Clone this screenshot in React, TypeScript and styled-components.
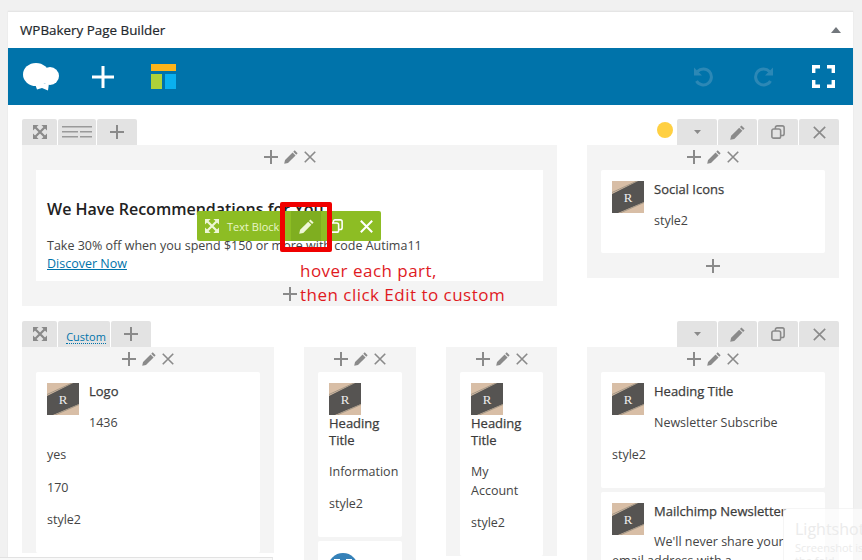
import React from 'react';
import styled, { createGlobalStyle } from 'styled-components';

const GlobalStyle = createGlobalStyle`
  html, body {
    margin: 0;
    padding: 0;
    overflow: hidden;
    background: #f1f1f1;
  }
  * {
    box-sizing: border-box;
  }
`;

const Page = styled.div`
  position: relative;
  width: 862px;
  height: 560px;
  overflow: hidden;
  padding: 11px 0 0 8px;
  font-family: 'Open Sans', 'Noto Sans', sans-serif;
  font-size: 12.5px;
  line-height: 19px;
  color: #444;
`;

const Panel = styled.div`
  width: 845px;
  height: 600px;
  background: #fff;
  border-top: 1px solid #e5e5e5;
  box-shadow: 0 0 1px #ddd;
`;

const PanelHeader = styled.div`
  display: flex;
  align-items: center;
  justify-content: space-between;
  height: 36px;
  padding: 0 12px;
  font-size: 13.4px;
  font-weight: 500;
  color: #23282d;
  -webkit-text-stroke: 0.2px #23282d;
`;

const CollapseArrow = styled.span`
  width: 0;
  height: 0;
  border-left: 5px solid transparent;
  border-right: 5px solid transparent;
  border-bottom: 6px solid #72777c;
`;

const Toolbar = styled.div`
  display: flex;
  justify-content: space-between;
  height: 57px;
  padding-left: 3px;
  background: #0073aa;
`;

const ToolbarGroup = styled.div`
  display: flex;
`;

const ToolbarButton = styled.div<{ $gap?: number }>`
  display: flex;
  align-items: center;
  justify-content: center;
  width: 60px;
  height: 57px;
  margin-right: ${(p) => p.$gap ?? 0}px;
`;

const Editor = styled.div`
  padding: 14px 14px 0;
`;

const Row = styled.section`
  margin-bottom: 15px;
`;

const RowControls = styled.div`
  display: flex;
  justify-content: space-between;
  height: 26px;
`;

const TabGroup = styled.div`
  display: flex;
  align-items: flex-end;
  gap: 1px;
`;

const Tab = styled.div<{ $width: number }>`
  display: flex;
  align-items: center;
  justify-content: center;
  width: ${(p) => p.$width}px;
  height: 26px;
  background: #e3e3e3;
  border-radius: 2px 2px 0 0;
`;

const CustomLink = styled.a`
  font-size: 11px;
  line-height: 13px;
  margin: 6px 0 0 4px;
  color: #0073aa;
  border-bottom: 1px dotted #0073aa;
`;

const StatusDot = styled.span`
  width: 16px;
  height: 16px;
  margin: 3px 3px 0 0;
  align-self: flex-start;
  border-radius: 50%;
  background: #ffd042;
`;

const RowBody = styled.div<{ $columns: string }>`
  display: grid;
  grid-template-columns: ${(p) => p.$columns};
  column-gap: 30px;
  align-items: start;
`;

const Column = styled.div`
  padding: 0 14px;
  background: #f4f4f4;
`;

const ColumnControls = styled.div`
  display: flex;
  align-items: center;
  justify-content: center;
  gap: 6px;
  height: 25px;
  padding-bottom: 1px;
`;

const ColumnFooter = styled.div`
  display: flex;
  align-items: center;
  justify-content: center;
  height: 25px;
`;

const Card = styled.div`
  padding: 11px 11px 1px;
  background: #fff;
  border-radius: 2px;
  & + & {
    margin-top: 4px;
  }
  &::after {
    content: '';
    display: block;
    clear: both;
  }
`;

const Thumb = styled.svg`
  float: left;
  width: 32px;
  height: 32px;
  margin-right: 10px;
`;

const ElementName = styled.div`
  margin-bottom: 12.5px;
  font-size: 13px;
  line-height: 17px;
  font-weight: 500;
  color: #3c3c3c;
  -webkit-text-stroke: 0.25px #3c3c3c;
`;

const Param = styled.p`
  margin: 0 0 13.5px;
`;

const Spacer = styled.div`
  height: 9px;
`;

const TextCard = styled.div`
  height: 111px;
  padding: 28px 11px 0;
  background: #fff;
`;

const TextHeading = styled.h3`
  margin: 0 0 17px;
  font-size: 16px;
  line-height: 22px;
  font-weight: 600;
  color: #222;
`;

const TextLine = styled.div`
  line-height: 18px;
`;

const TextLink = styled.a`
  color: #0073aa;
  text-decoration: underline;
`;

const GreenBar = styled.div`
  position: absolute;
  left: 197px;
  top: 211px;
  display: flex;
  align-items: center;
  width: 184px;
  height: 30px;
  background: #8dbd24;
  border-radius: 2px;
  color: #e9f5c9;
  font-size: 11px;
`;

const GreenItem = styled.div<{ $width: number; $active?: boolean }>`
  display: flex;
  align-items: center;
  justify-content: center;
  width: ${(p) => p.$width}px;
  height: 30px;
  background: ${(p) => (p.$active ? '#7fae20' : 'transparent')};
`;

const BarLabel = styled.span`
  width: 64px;
  white-space: nowrap;
`;

const RedFrame = styled.div`
  position: absolute;
  left: 280px;
  top: 202px;
  width: 52px;
  height: 50px;
  border: 5px solid #f00000;
  border-radius: 2px;
`;

const Note = styled.div`
  position: absolute;
  left: 300px;
  top: 259px;
  font-size: 17px;
  line-height: 24px;
  letter-spacing: 0.48px;
  color: #e01a1f;
`;

const ShotToast = styled.div`
  position: absolute;
  left: 783px;
  top: 508px;
  width: 90px;
  height: 60px;
  padding: 10px 0 0 11px;
  background: rgba(255, 255, 255, 0.6);
  border: 1px solid rgba(225, 225, 225, 0.35);
  color: #ebebeb;
  overflow: hidden;
`;

const ToastTitle = styled.div`
  margin-bottom: 2px;
  font-size: 16px;
  line-height: 20px;
`;

const ToastText = styled.div`
  font-size: 11px;
  line-height: 13px;
  white-space: nowrap;
`;

const BottomEdge = styled.div`
  position: absolute;
  left: 0;
  bottom: 0;
  width: 273px;
  height: 3px;
  background: #f8f8f8;
  border-top: 1px solid #e2e2e2;
  border-right: 1px solid #e8e8e8;
`;

const GREY = '#8a8a8a';

function PlusIcon({ size = 14, color = GREY, width = 2 }: { size?: number; color?: string; width?: number }) {
  return (
    <svg width={size} height={size} viewBox="0 0 16 16">
      <path d="M8 0V16M0 8H16" stroke={color} strokeWidth={width * (16 / size)} fill="none" />
    </svg>
  );
}

function CloseIcon({ size = 13, color = GREY, width = 1.6 }: { size?: number; color?: string; width?: number }) {
  return (
    <svg width={size} height={size} viewBox="0 0 16 16">
      <path d="M1 1L15 15M15 1L1 15" stroke={color} strokeWidth={width * (16 / size)} fill="none" />
    </svg>
  );
}

function PencilIcon({ size = 15, color = GREY }: { size?: number; color?: string }) {
  return (
    <svg width={size} height={size} viewBox="0 0 16 16" fill={color}>
      <path d="M12.2 0.4L15.6 3.8L14 5.4L10.6 2Z" />
      <path d="M9.8 2.8L13.2 6.2L4.6 14.8L0.2 15.8L1.2 11.4Z" />
    </svg>
  );
}

function CopyIcon({ size = 14, color = GREY }: { size?: number; color?: string }) {
  return (
    <svg width={size} height={size} viewBox="0 0 16 16" fill="none" stroke={color} strokeWidth="1.8">
      <rect x="1" y="4.5" width="10" height="10.5" rx="2" />
      <path d="M5 4.5V3a2 2 0 0 1 2-2h6a2 2 0 0 1 2 2v7a2 2 0 0 1-2 2h-2" />
    </svg>
  );
}

function ExpandIcon({ color = GREY, size = 14 }: { color?: string; size?: number }) {
  return (
    <svg width={size} height={size} viewBox="0 0 14 14" fill={color}>
      <path d="M0 0H5.6L0 5.6ZM14 0V5.6L8.4 0ZM0 14V8.4L5.6 14ZM14 14H8.4L14 8.4Z" />
      <path d="M2.5 2.5L11.5 11.5M11.5 2.5L2.5 11.5" stroke={color} strokeWidth="2.2" />
    </svg>
  );
}

function LinesIcon() {
  return (
    <svg width="30" height="12" viewBox="0 0 30 12" fill="#9a9a9a">
      <path d="M0 0H30V1.4H0ZM0 5H16V6.4H0ZM18 5H30V6.4H18ZM0 10H16V11.4H0ZM18 10H30V11.4H18Z" />
    </svg>
  );
}

function CaretIcon() {
  return (
    <svg width="7" height="4" viewBox="0 0 7 4">
      <path d="M0 0H7L3.5 4Z" fill={GREY} />
    </svg>
  );
}

function CloudLogo() {
  return (
    <svg width="36" height="28" viewBox="0 0 36 28" fill="#fff">
      <ellipse cx="13" cy="11.5" rx="13" ry="11.5" />
      <ellipse cx="27" cy="13" rx="9" ry="9" />
      <path d="M12 21L14 26.5L19 25L25 27.5L26 20Z" />
    </svg>
  );
}

function LayoutLogo() {
  return (
    <svg width="26" height="26" viewBox="0 0 26 26">
      <rect x="0" y="0" width="25" height="7" fill="#fdb41a" />
      <rect x="0" y="10" width="11" height="15" fill="#aed13a" />
      <rect x="14" y="10" width="11" height="15" fill="#0ab0ef" />
    </svg>
  );
}

function UndoIcon({ flip }: { flip?: boolean }) {
  return (
    <svg width="21" height="21" viewBox="0 0 21 21" fill="none" style={flip ? { transform: 'scaleX(-1)' } : undefined}>
      <path d="M4.5 5.5A8 8 0 1 1 3.5 15" stroke="#2c88b6" strokeWidth="3" />
      <path d="M1 1.5V9.5H9Z" fill="#2c88b6" />
    </svg>
  );
}

function FullscreenIcon() {
  return (
    <svg width="23" height="23" viewBox="0 0 23 23" fill="none" stroke="#fff" strokeWidth="3.4">
      <path d="M1.7 8V1.7H8M15 1.7H21.3V8M21.3 15V21.3H15M8 21.3H1.7V15" />
    </svg>
  );
}

function RThumb() {
  return (
    <Thumb viewBox="0 0 32 32">
      <rect width="32" height="32" fill="#d8bea6" />
      <path d="M0 13L32 -3V21L6 32H0Z" fill="#565452" />
      <path d="M0 11.5L25 0M8 32L32 21.5" stroke="#8d8678" strokeWidth="0.7" />
      <text x="16" y="21" textAnchor="middle" fontFamily="'Liberation Serif', serif" fontSize="13" fill="#eee">
        R
      </text>
    </Thumb>
  );
}

function GlobeBadge() {
  return (
    <svg width="32" height="32" viewBox="0 0 32 32">
      <circle cx="14" cy="16" r="15" fill="#3581b8" />
      <path d="M5 7H11V10H5ZM17 7H23V10H17Z" fill="#fff" />
    </svg>
  );
}

function ElementControls() {
  return (
    <ColumnControls>
      <PlusIcon />
      <PencilIcon size={14} />
      <CloseIcon size={12} />
    </ColumnControls>
  );
}

function RowActions({ dot }: { dot?: boolean }) {
  return (
    <TabGroup>
      {dot && <StatusDot />}
      <Tab $width={40}>
        <CaretIcon />
      </Tab>
      <Tab $width={39}>
        <PencilIcon />
      </Tab>
      <Tab $width={40}>
        <CopyIcon />
      </Tab>
      <Tab $width={40}>
        <CloseIcon />
      </Tab>
    </TabGroup>
  );
}

interface ElementCardProps {
  name: string;
  params: string[];
}

function ElementCard({ name, params }: ElementCardProps) {
  return (
    <Card>
      <RThumb />
      <ElementName>{name}</ElementName>
      {params.map((param) => (
        <Param key={param}>{param}</Param>
      ))}
      <Spacer />
    </Card>
  );
}

export default function App() {
  return (
    <Page>
      <GlobalStyle />
      <Panel>
        <PanelHeader>
          WPBakery Page Builder
          <CollapseArrow />
        </PanelHeader>
        <Toolbar>
          <ToolbarGroup>
            <ToolbarButton $gap={2}>
              <CloudLogo />
            </ToolbarButton>
            <ToolbarButton $gap={1}>
              <PlusIcon size={22} color="#fff" width={3} />
            </ToolbarButton>
            <ToolbarButton>
              <LayoutLogo />
            </ToolbarButton>
          </ToolbarGroup>
          <ToolbarGroup>
            <ToolbarButton>
              <UndoIcon />
            </ToolbarButton>
            <ToolbarButton>
              <UndoIcon flip />
            </ToolbarButton>
            <ToolbarButton>
              <FullscreenIcon />
            </ToolbarButton>
          </ToolbarGroup>
        </Toolbar>
        <Editor>
          <Row>
            <RowControls>
              <TabGroup>
                <Tab $width={35}>
                  <ExpandIcon />
                </Tab>
                <Tab $width={38}>
                  <LinesIcon />
                </Tab>
                <Tab $width={40}>
                  <PlusIcon />
                </Tab>
              </TabGroup>
              <RowActions dot />
            </RowControls>
            <RowBody $columns="535px 252px">
              <Column>
                <ElementControls />
                <TextCard>
                  <TextHeading>We Have Recommendations for You</TextHeading>
                  <TextLine>Take 30% off when you spend $150 or more with code Autima11</TextLine>
                  <TextLine>
                    <TextLink>Discover Now</TextLink>
                  </TextLine>
                </TextCard>
                <ColumnFooter>
                  <PlusIcon />
                </ColumnFooter>
              </Column>
              <Column>
                <ElementControls />
                <ElementCard name="Social Icons" params={['style2']} />
                <ColumnFooter>
                  <PlusIcon />
                </ColumnFooter>
              </Column>
            </RowBody>
          </Row>
          <Row>
            <RowControls>
              <TabGroup>
                <Tab $width={35}>
                  <ExpandIcon />
                </Tab>
                <Tab $width={52}>
                  <CustomLink>Custom</CustomLink>
                </Tab>
                <Tab $width={40}>
                  <PlusIcon />
                </Tab>
              </TabGroup>
              <RowActions />
            </RowControls>
            <RowBody $columns="252px 112px 111px 252px">
              <Column>
                <ElementControls />
                <ElementCard name="Logo" params={['1436', 'yes', '170', 'style2']} />
              </Column>
              <Column>
                <ElementControls />
                <ElementCard name="Heading Title" params={['Information', 'style2']} />
                <Card>
                  <GlobeBadge />
                </Card>
              </Column>
              <Column>
                <ElementControls />
                <ElementCard name="Heading Title" params={['My Account', 'style2']} />
              </Column>
              <Column>
                <ElementControls />
                <ElementCard name="Heading Title" params={['Newsletter Subscribe', 'style2']} />
                <ElementCard
                  name="Mailchimp Newsletter"
                  params={["We'll never share your email address with a"]}
                />
              </Column>
            </RowBody>
          </Row>
        </Editor>
      </Panel>
      <GreenBar>
        <GreenItem $width={30}>
          <ExpandIcon color="#eef7d6" />
        </GreenItem>
        <BarLabel>Text Block</BarLabel>
        <GreenItem $width={30} $active>
          <PencilIcon color="#eef7d6" />
        </GreenItem>
        <GreenItem $width={30}>
          <CopyIcon color="#fff" />
        </GreenItem>
        <GreenItem $width={30}>
          <CloseIcon color="#fff" size={13} width={2} />
        </GreenItem>
      </GreenBar>
      <RedFrame />
      <Note>
        hover each part,
        <br />
        then click Edit to custom
      </Note>
      <BottomEdge />
      <ShotToast>
        <ToastTitle>Lightshot</ToastTitle>
        <ToastText>Screenshot is</ToastText>
        <ToastText>the fold</ToastText>
      </ShotToast>
    </Page>
  );
}
